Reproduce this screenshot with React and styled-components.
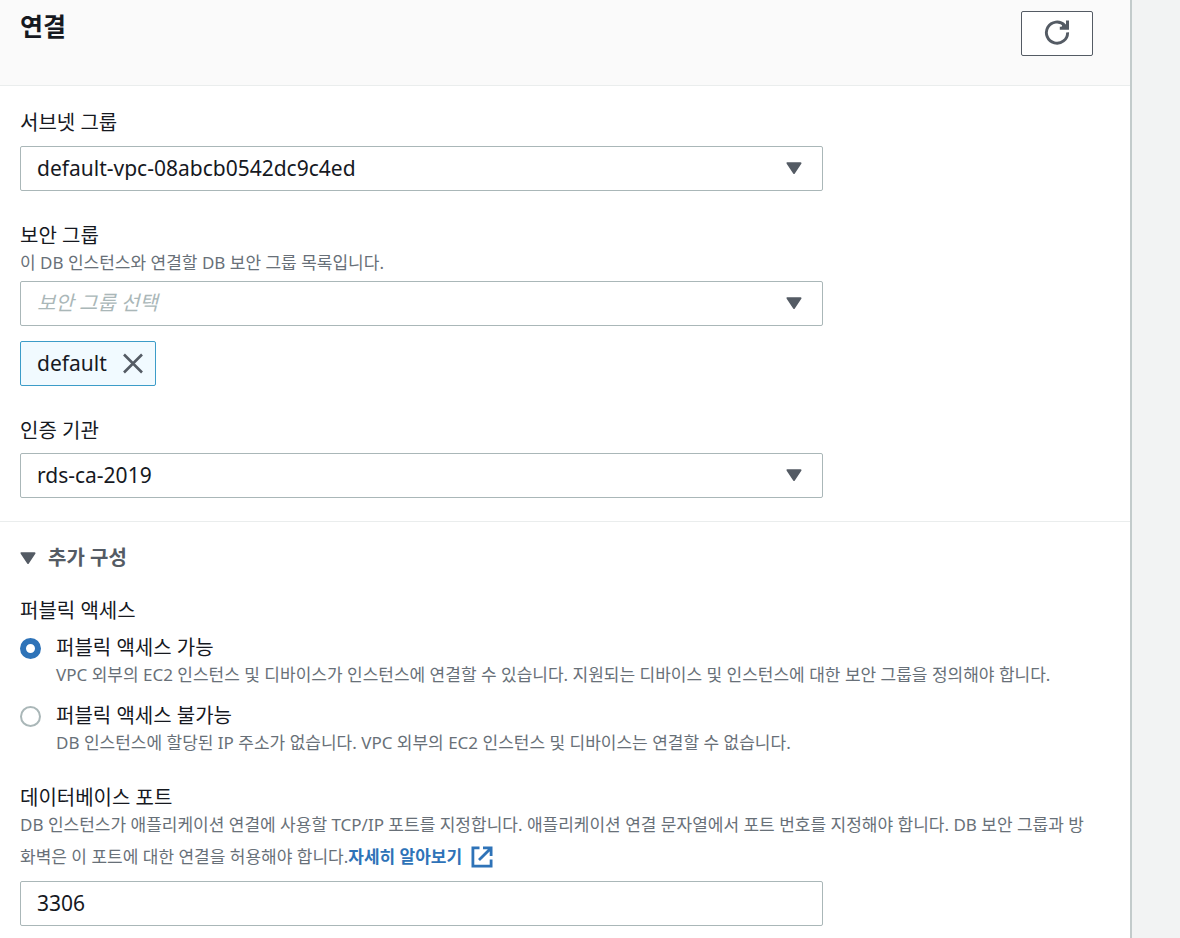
import React, { useState } from "react";
import styled, { createGlobalStyle } from "styled-components";

const CaretIcon = () => (
  <svg width="16" height="13" viewBox="0 0 16 13" aria-hidden="true">
    <path
      d="M1.5 1.2h13L8 11z"
      fill="#545b64"
      stroke="#545b64"
      strokeWidth="2"
      strokeLinejoin="round"
    />
  </svg>
);

const RefreshIcon = () => (
  <svg width="26" height="26" viewBox="0 0 26 26" aria-hidden="true">
    <path
      d="M23.6 12.4A10.6 10.6 0 1 1 20.6 5.2L23 7.6"
      fill="none"
      stroke="#545b64"
      strokeWidth="2.9"
    />
    <path d="M22 .6h3v9.2h-9.2V6.8H22z" fill="#545b64" />
    <path d="M18.5 4L23.5 9H17z" fill="#545b64" />
  </svg>
);

const CloseIcon = () => (
  <svg width="22" height="22" viewBox="0 0 22 22" aria-hidden="true">
    <path d="M2 1.5l18 18M20 1.5l-18 18" fill="none" stroke="#545b64" strokeWidth="2.6" />
  </svg>
);

const ExternalIcon = () => (
  <svg width="22" height="22" viewBox="0 0 22 22" aria-hidden="true">
    <path
      d="M8.5 1.9H1.9v18.2h18.2v-6.6M12 1.9h8.1V10M19.6 2.4L8 14"
      fill="none"
      stroke="#2e73b8"
      strokeWidth="2.8"
    />
  </svg>
);

const accessOptions = [
  {
    value: "public",
    label: "퍼블릭 액세스 가능",
    help: "VPC 외부의 EC2 인스턴스 및 디바이스가 인스턴스에 연결할 수 있습니다. 지원되는 디바이스 및 인스턴스에 대한 보안 그룹을 정의해야 합니다.",
  },
  {
    value: "private",
    label: "퍼블릭 액세스 불가능",
    help: "DB 인스턴스에 할당된 IP 주소가 없습니다. VPC 외부의 EC2 인스턴스 및 디바이스는 연결할 수 없습니다.",
  },
];

const App = () => {
  const [groups, setGroups] = useState(["default"]);
  const [expanded, setExpanded] = useState(true);
  const [access, setAccess] = useState("public");
  const [port, setPort] = useState("3306");

  return (
    <Page>
      <GlobalStyle />
      <Panel>
        <Header>
          <Title>연결</Title>
          <RefreshButton type="button" aria-label="새로 고침">
            <RefreshIcon />
          </RefreshButton>
        </Header>

        <Section>
          <Field>
            <Label htmlFor="subnet">서브넷 그룹</Label>
            <SelectWrap $gap={12}>
              <Select id="subnet">
                <option>default-vpc-08abcb0542dc9c4ed</option>
              </Select>
              <CaretIcon />
            </SelectWrap>
          </Field>

          <Field>
            <Label htmlFor="security">보안 그룹</Label>
            <Help>이 DB 인스턴스와 연결할 DB 보안 그룹 목록입니다.</Help>
            <SelectWrap $gap={2}>
              <Select id="security" $placeholder>
                <option>보안 그룹 선택</option>
              </Select>
              <CaretIcon />
            </SelectWrap>
            <Tokens>
              {groups.map((group) => (
                <Token key={group}>
                  <TokenText>{group}</TokenText>
                  <RemoveButton
                    type="button"
                    aria-label={`${group} 제거`}
                    onClick={() => setGroups(groups.filter((g) => g !== group))}
                  >
                    <CloseIcon />
                  </RemoveButton>
                </Token>
              ))}
            </Tokens>
          </Field>

          <Field>
            <Label htmlFor="authority">인증 기관</Label>
            <SelectWrap $gap={11}>
              <Select id="authority">
                <option>rds-ca-2019</option>
              </Select>
              <CaretIcon />
            </SelectWrap>
          </Field>
        </Section>

        <Extra>
          <Expander
            type="button"
            aria-expanded={expanded}
            onClick={() => setExpanded(!expanded)}
          >
            <CaretIcon />
            추가 구성
          </Expander>

          {expanded && (
            <>
              <RadioGroup>
                <Legend>퍼블릭 액세스</Legend>
                <Options>
                  {accessOptions.map((option) => (
                    <Option key={option.value}>
                      <Radio
                        type="radio"
                        name="access"
                        id={option.value}
                        checked={access === option.value}
                        onChange={() => setAccess(option.value)}
                      />
                      <div>
                        <Label htmlFor={option.value}>{option.label}</Label>
                        <Help>{option.help}</Help>
                      </div>
                    </Option>
                  ))}
                </Options>
              </RadioGroup>

              <Field>
                <Label htmlFor="port">데이터베이스 포트</Label>
                <Help>
                  DB 인스턴스가 애플리케이션 연결에 사용할 TCP/IP 포트를 지정합니다.
                  애플리케이션 연결 문자열에서 포트 번호를 지정해야 합니다. DB 보안
                  그룹과 방화벽은 이 포트에 대한 연결을 허용해야 합니다.
                  <Link href="#learn-more">
                    자세히 알아보기
                    <ExternalIcon />
                  </Link>
                </Help>
                <TextInput
                  id="port"
                  type="text"
                  value={port}
                  onChange={(ev) => setPort(ev.target.value)}
                />
              </Field>
            </>
          )}
        </Extra>
      </Panel>
    </Page>
  );
};

const GlobalStyle = createGlobalStyle`
  * {
    box-sizing: border-box;
  }

  body {
    margin: 0;
    background-color: #f2f3f3;
    color: #16191f;
    font-family: "Noto Sans", "Noto Sans CJK KR", sans-serif;
    font-size: 20px;
    line-height: 24px;
  }

  button,
  input,
  select {
    font: inherit;
    color: inherit;
  }
`;

const Page = styled.div`
  min-height: 100vh;
  padding-right: 48px;
  display: flex;
`;

const Panel = styled.main`
  flex: 1;
  min-width: 0;
  background-color: white;
  border-right: 2px solid #c3cbcb;
`;

const Header = styled.header`
  display: flex;
  justify-content: space-between;
  align-items: flex-start;
  padding: 11px 37px 29px 20px;
  background-color: #fafafa;
  border-bottom: 1px solid #eaeded;
`;

const Title = styled.h2`
  margin: 0;
  font-size: 25px;
  line-height: 30px;
  font-weight: bold;
`;

const RefreshButton = styled.button`
  display: flex;
  justify-content: center;
  align-items: center;
  width: 72px;
  height: 45px;
  padding: 0 0 2px;
  background-color: white;
  border: 1px solid #545b64;
  border-radius: 2px;
  cursor: pointer;
`;

const Section = styled.section`
  display: flex;
  flex-direction: column;
  gap: 34px;
  padding: 26px 37px 23px 20px;
`;

const Extra = styled.section`
  display: flex;
  flex-direction: column;
  align-items: flex-start;
  padding: 24px 37px 12px 20px;
  border-top: 1px solid #eaeded;
`;

const Field = styled.div`
  display: flex;
  flex-direction: column;
  align-items: flex-start;
`;

const Label = styled.label`
  display: block;
  line-height: 22px;
`;

const Help = styled.p`
  margin: 0;
  font-size: 17px;
  line-height: 32px;
  color: #687078;
`;

const SelectWrap = styled.div`
  display: grid;
  align-items: center;
  width: 100%;
  max-width: 803px;
  margin-top: ${(props) => props.$gap}px;

  > * {
    grid-area: 1 / 1;
  }

  > svg {
    justify-self: end;
    margin-right: 21px;
    pointer-events: none;
  }
`;

const Select = styled.select`
  appearance: none;
  width: 100%;
  height: 45px;
  padding: 0 48px 2px 16px;
  background-color: white;
  border: 1px solid #aab7b8;
  border-radius: 2px;
  color: ${(props) => (props.$placeholder ? "#aab7b8" : "#16191f")};
  font-size: ${(props) => (props.$placeholder ? "20px" : "21px")};
  font-style: ${(props) => (props.$placeholder ? "italic" : "normal")};
`;

const Tokens = styled.div`
  display: flex;
  gap: 15px;
  margin-top: 15px;
`;

const Token = styled.div`
  display: flex;
  align-items: center;
  gap: 15px;
  height: 45px;
  padding: 0 11px 0 16px;
  background-color: #f1faff;
  border: 1px solid #3c9cc8;
  border-radius: 2px;
`;

const TokenText = styled.span`
  padding-bottom: 2px;
  font-size: 21px;
`;

const RemoveButton = styled.button`
  display: flex;
  padding: 0;
  background: none;
  border: none;
  cursor: pointer;
`;

const Expander = styled.button`
  display: flex;
  align-items: center;
  gap: 12px;
  padding: 0;
  background: none;
  border: none;
  color: #545b64;
  font-weight: bold;
  cursor: pointer;
`;

const RadioGroup = styled.fieldset`
  margin: 29px 0 28px;
  padding: 0;
  border: none;
`;

const Legend = styled.legend`
  padding: 0;
`;

const Options = styled.div`
  display: flex;
  flex-direction: column;
  gap: 14px;
  margin-top: 14px;
`;

const Option = styled.div`
  display: flex;
  align-items: flex-start;
  gap: 15px;
`;

const Radio = styled.input`
  appearance: none;
  flex: none;
  width: 21px;
  height: 21px;
  margin: 1px 0 0;
  background-color: white;
  border: 2px solid #aab7b8;
  border-radius: 50%;

  &:checked {
    border: 6px solid #2e73b8;
  }
`;

const Link = styled.a`
  color: #2e73b8;
  font-weight: bold;
  text-decoration: none;

  svg {
    margin: 0 0 2px 9px;
    vertical-align: middle;
  }
`;

const TextInput = styled.input`
  width: 100%;
  max-width: 803px;
  height: 45px;
  margin-top: 8px;
  padding: 0 16px 2px;
  background-color: white;
  border: 1px solid #aab7b8;
  border-radius: 2px;
  font-size: 21px;
`;

export default App;
